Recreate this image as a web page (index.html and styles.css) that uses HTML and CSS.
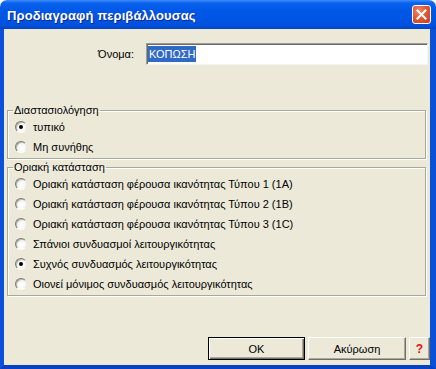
FILE: index.html
```html
<!DOCTYPE html>
<html lang="el">
<head>
<meta charset="utf-8">
<title>Προδιαγραφή περιβάλλουσας</title>
<link rel="stylesheet" href="styles.css">
</head>
<body>
<div class="window">
  <div class="titlebar">
    <span class="title">Προδιαγραφή περιβάλλουσας</span>
    <span class="close"><svg width="11" height="11" viewBox="0 0 11 11"><path d="M1.5 1.5 L9.5 9.5 M9.5 1.5 L1.5 9.5" stroke="#fff" stroke-width="2" stroke-linecap="square"/></svg></span>
  </div>
  <div class="client">
    <div class="namerow">
      <span class="label">Όνομα:</span>
      <div class="edit"><span class="sel">ΚΟΠΩΣΗ</span></div>
    </div>
    <fieldset class="group g1">
      <legend>Διαστασιολόγηση</legend>
      <div class="radio"><span class="dot on"></span><span>τυπικό</span></div>
      <div class="radio"><span class="dot"></span><span>Μη συνήθης</span></div>
    </fieldset>
    <fieldset class="group g2">
      <legend>Οριακή κατάσταση</legend>
      <div class="radio"><span class="dot"></span><span>Οριακή κατάσταση φέρουσα ικανότητας Τύπου 1 (1Α)</span></div>
      <div class="radio"><span class="dot"></span><span>Οριακή κατάσταση φέρουσα ικανότητας Τύπου 2 (1Β)</span></div>
      <div class="radio"><span class="dot"></span><span>Οριακή κατάσταση φέρουσα ικανότητας Τύπου 3 (1C)</span></div>
      <div class="radio"><span class="dot"></span><span>Σπάνιοι συνδυασμοί λειτουργικότητας</span></div>
      <div class="radio"><span class="dot on"></span><span>Συχνός συνδυασμός λειτουργικότητας</span></div>
      <div class="radio"><span class="dot"></span><span>Οιονεί μόνιμος συνδυασμός λειτουργικότητας</span></div>
    </fieldset>
    <div class="buttons">
      <div class="btn default">OK</div>
      <div class="btn cancel">Ακύρωση</div>
      <div class="btn help">?</div>
    </div>
  </div>
</div>
</body>
</html>
```
FILE: styles.css
```css
html, body {
  margin: 0;
  padding: 0;
  background: #ffffff;
}
.window {
  width: 436px;
  height: 369px;
  display: flex;
  flex-direction: column;
  font-family: "Liberation Sans", Arial, sans-serif;
  font-size: 11px;
  color: #000;
}
.titlebar {
  height: 29px;
  flex: none;
  display: flex;
  align-items: center;
  padding-left: 7px;
  padding-right: 5px;
  border-radius: 7px 7px 0 0;
  background: linear-gradient(to bottom, #3d8bff 0px, #0a62ec 3px, #0058e8 10px, #0054e3 20px, #0050db 26px, #0043c4 29px);
}
.title {
  flex: 1;
  color: #fff;
  font-weight: bold;
  font-size: 13px;
  letter-spacing: 0.1px;
  text-shadow: 1px 1px #0a2a8a;
  margin-top: 1px;
}
.close {
  width: 17px;
  height: 17px;
  border: 1px solid #fff;
  border-radius: 3px;
  background: radial-gradient(circle at 35% 30%, #f08a6a 0%, #e05a35 45%, #c8401c 100%);
  display: flex;
  align-items: center;
  justify-content: center;
  margin-top: -1px;
}
.client {
  flex: 1;
  display: flex;
  flex-direction: column;
  background: #ece9d8;
  border-left: 4px solid #0a50d8;
  border-right: 6px solid #0a50d8;
  border-bottom: 4px solid #0742c4;
}
.namerow {
  display: flex;
  align-items: center;
  margin-top: 14px;
  padding-right: 2px;
}
.label {
  width: 130px;
  text-align: right;
  margin-right: 12px;
}
.edit {
  flex: 1;
  height: 22px;
  box-sizing: border-box;
  background: #fff;
  border: 1px solid;
  border-color: #9c9c9c #f4f4f4 #f4f4f4 #9c9c9c;
  box-shadow: inset 1px 1px #6a6a6a;
  display: flex;
  align-items: center;
  padding-left: 1px;
}
.sel {
  background: #316ac5;
  color: #fff;
  line-height: 16px;
  padding: 0 1px;
  font-size: 11px;
}
.group {
  margin: 0 4px 0 3px;
  padding: 0 6px 0 6px;
  border: 1px solid #aca899;
  box-shadow: inset 1px 1px #ffffff, 1px 1px #ffffff;
  min-width: 0;
}
.group legend {
  padding: 0 1px;
  line-height: 13px;
  margin-left: -1px;
}
.g1 {
  margin-top: 39px;
  padding-bottom: 1px;
}
.g2 {
  margin-top: 2px;
  padding-top: 0;
  padding-bottom: 1px;
}
.radio {
  height: 20px;
  display: flex;
  align-items: center;
}
.dot {
  width: 12px;
  height: 12px;
  box-sizing: border-box;
  border-radius: 50%;
  border: 1px solid;
  border-color: #7a7a7a #e8e8e8 #ffffff #7a7a7a;
  background: radial-gradient(circle at 60% 60%, #ffffff 0%, #f4f4f0 60%, #e0e0d8 100%);
  box-shadow: inset 1px 1px #b8b8b0;
  margin-right: 6px;
  margin-left: 1px;
  display: flex;
  align-items: center;
  justify-content: center;
}
.dot.on::after {
  content: "";
  width: 4px;
  height: 4px;
  border-radius: 50%;
  background: #000;
}
.buttons {
  margin-top: auto;
  margin-bottom: 5px;
  display: flex;
  justify-content: flex-end;
  gap: 3px;
  padding-right: 0;
}
.btn {
  height: 23px;
  box-sizing: border-box;
  display: flex;
  align-items: center;
  justify-content: center;
  background: #ece9d8;
  border: 1px solid;
  border-color: #ffffff #716f64 #716f64 #ffffff;
  box-shadow: inset -1px -1px #aca899;
}
.default {
  width: 97px;
  border: 1px solid #000;
  box-shadow: inset 1px 1px #ffffff, inset -1px -1px #716f64, inset -2px -2px #aca899;
}
.cancel {
  width: 98px;
}
.help {
  width: 21px;
  color: #e01010;
  font-weight: bold;
  font-size: 12px;
}
```
